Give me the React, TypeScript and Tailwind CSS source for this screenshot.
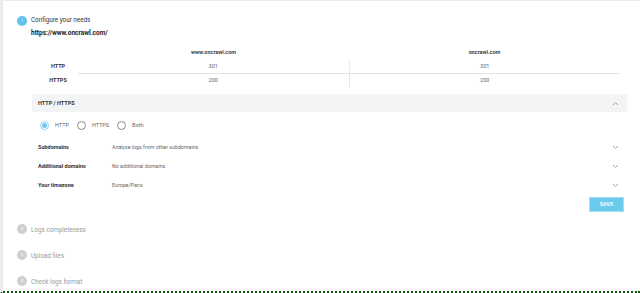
import React from "react";

const Chevron = ({ up = false }: { up?: boolean }) => (
  <svg width="7" height="5" viewBox="0 0 7 5" className="shrink-0">
    <polyline
      points={up ? "1,4 3.5,1.5 6,4" : "1,1 3.5,3.5 6,1"}
      fill="none"
      stroke="#9a9a9a"
      strokeWidth="0.9"
    />
  </svg>
);

const Radio = ({ checked, label }: { checked?: boolean; label: string }) => (
  <div className="flex items-center gap-[6px]">
    <div
      className={
        checked
          ? "w-[9px] h-[9px] rounded-full border border-[#8fd3ef] flex items-center justify-center"
          : "w-[9px] h-[9px] rounded-full border border-[#8a8a8a]"
      }
    >
      {checked && <div className="w-[5px] h-[5px] rounded-full bg-[#6cc8ec]" />}
    </div>
    <span className="text-[5.5px] text-[#666]">{label}</span>
  </div>
);

const Setting = ({ label, value }: { label: string; value: string }) => (
  <div className="h-[19px] flex items-center pl-[6px] pr-[8px]">
    <div className="w-[74px] text-[5.5px] font-bold text-[#333]">{label}</div>
    <div className="flex-1 text-[5.3px] text-[#666]">{value}</div>
    <Chevron />
  </div>
);

const Step = ({ n, label }: { n: number; label: string }) => (
  <div className="flex items-center h-[10px] gap-[4px]">
    <div className="w-[10px] h-[10px] rounded-full bg-[#cfcfcf] flex items-center justify-center text-[4px] text-white leading-none">
      {n}
    </div>
    <span className="text-[6.3px] leading-[10px] pt-[1px] text-[#9a9a9a]">{label}</span>
  </div>
);

export default function App() {
  return (
    <div className="w-[640px] h-[293px] overflow-hidden">
      <div
        className="w-[640px] h-[293px] bg-white border-l-[3px] border-l-[#ececec] border-t border-t-[#ececec] border-b-2 border-b-[#0a4f0a] [border-bottom-style:dotted] overflow-hidden"
        style={{ fontFamily: "Roboto, 'Noto Sans', sans-serif" }}
      >
        <div className="pl-[14px] pt-[15px] flex flex-col">
          <div className="flex items-center h-[10px] gap-[4px]">
            <div className="w-[10px] h-[10px] rounded-full bg-[#5ec2ea] flex items-center justify-center text-[4px] text-white leading-none">
              1
            </div>
            <span className="text-[6.3px] text-[#333]">Configure your needs</span>
          </div>

          <div className="pl-[14px]">
            <div className="mt-[3px] h-[10px] flex items-center text-[6.5px] font-bold text-[#222]">
              https://www.oncrawl.com/
            </div>

            <div className="mt-[6px] w-[588px] ml-[1px] text-[5.5px]">
              <div className="flex h-[14px] items-center">
                <div className="w-[46px]" />
                <div className="flex-1 text-center font-semibold text-[#333]">www.oncrawl.com</div>
                <div className="flex-1 text-center font-semibold text-[#333]">oncrawl.com</div>
              </div>
              <div className="flex h-[14px]">
                <div className="w-[46px] pl-[6px] flex items-center justify-center font-bold text-[#333]">HTTP</div>
                <div className="flex-1 flex items-center justify-center text-[#666]">301</div>
                <div className="flex-1 flex items-center justify-center text-[#666] border-l border-[#ececec] mt-[1px]">301</div>
              </div>
              <div className="flex h-[14px]">
                <div className="w-[46px] pl-[6px] flex items-center justify-center font-bold text-[#333]">HTTPS</div>
                <div className="flex-1 flex items-center justify-center text-[#666] border-t border-[#e4e4e4]">200</div>
                <div className="flex-1 flex items-center justify-center text-[#666] border-t border-l border-[#e4e4e4]">200</div>
              </div>
            </div>

            <div className="mt-[7px] ml-[1px] w-[595px] h-[18px] bg-[#f3f4f6] flex items-center justify-between pl-[6px] pr-[8px]">
              <span className="text-[5.5px] font-bold text-[#333]">HTTP / HTTPS</span>
              <Chevron up />
            </div>

            <div className="ml-[1px] w-[595px]">
              <div className="mt-[8px] h-[10px] flex items-center gap-[8px] pl-[8px]">
                <Radio checked label="HTTP" />
                <Radio label="HTTPS" />
                <Radio label="Both" />
              </div>

              <div className="mt-[8px]">
                <Setting label="Subdomains" value="Analyze logs from other subdomains" />
                <Setting label="Additional domains" value="No additional domains" />
                <Setting label="Your timezone" value="Europe/Paris" />
              </div>

              <div className="mt-[2px] flex justify-end pr-[3px]">
                <div className="w-[35px] h-[15px] bg-[#6ccbed] flex items-center justify-center text-[5.5px] font-semibold text-white border border-[#a6def3]">
                  SAVE
                </div>
              </div>
            </div>
          </div>

          <div className="mt-[12px] flex flex-col gap-[16px]">
            <Step n={2} label="Logs completeness" />
            <Step n={3} label="Upload files" />
            <Step n={4} label="Check logs format" />
          </div>
        </div>
      </div>
    </div>
  );
}
